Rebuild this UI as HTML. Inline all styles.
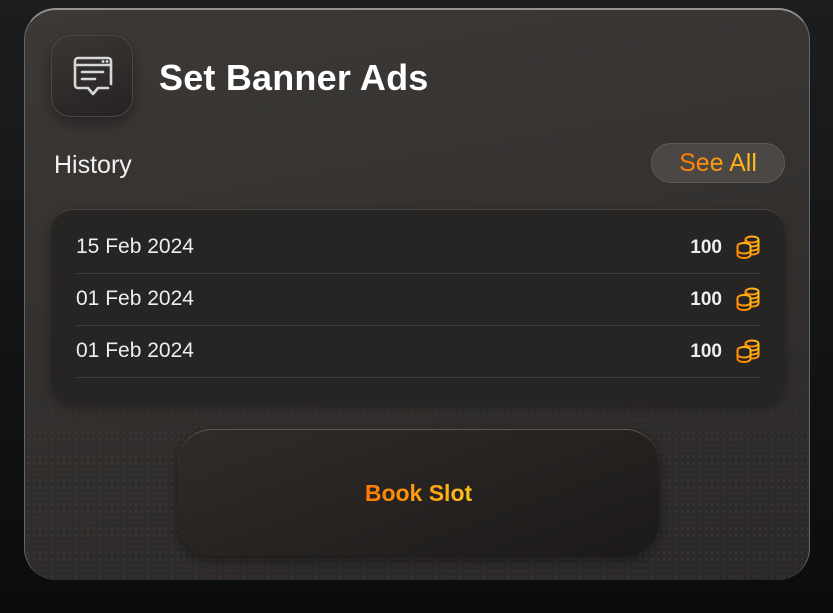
<!DOCTYPE html>
<html><head><meta charset="utf-8"><style>
*{margin:0;padding:0;box-sizing:border-box}
body{width:833px;height:613px;overflow:hidden;background:linear-gradient(#1c1d1f,#0b0c0d);font-family:"Liberation Sans",sans-serif;position:relative}
.card{position:absolute;left:24px;top:8px;width:786px;height:572px;border-radius:32px;background:linear-gradient(170deg,#3c3937 0%,#353230 40%,#2b2928 100%);border-top:2px solid #97928e;border-left:1.5px solid #6a6663;border-right:1.5px solid #6a6663;overflow:hidden}
.dots{position:absolute;left:0;right:0;top:360px;bottom:0;background-image:radial-gradient(circle,rgba(140,135,130,.3) 0.8px,transparent 1.2px);background-size:6px 6px;opacity:.45;-webkit-mask-image:linear-gradient(transparent,#000 40%);mask-image:linear-gradient(transparent,#000 40%)}
.ib{position:absolute;left:26px;top:25px;width:82px;height:82px;border-radius:20px;background:linear-gradient(160deg,#3a3634,#252322);border:1px solid #4a4644;box-shadow:0 6px 14px rgba(0,0,0,.35)}
.title{position:absolute;left:134px;top:47px;color:#fff;font-size:36px;font-weight:bold;letter-spacing:.2px}
.hist{position:absolute;left:29px;top:141px;color:#f2f2f2;font-size:25px}
.see{position:absolute;left:626px;top:133px;width:134px;height:40px;border-radius:20px;background:#4a4745;border:1px solid #5e5a57;font-size:25px;text-align:center;line-height:38px}
.grad{background:linear-gradient(90deg,#ff7a00,#ffc21a);-webkit-background-clip:text;background-clip:text;color:transparent}
.box{position:absolute;left:26px;top:199px;width:734px;height:194px;border-radius:22px;background:#272523;border-top:1px solid #4a4643;box-shadow:0 4px 10px rgba(0,0,0,.3)}
.row{position:absolute;left:25px;width:684px;height:52px;border-bottom:1.5px solid #3d3a38;color:#eee;font-size:21px}
.row .d{position:absolute;left:0;top:13px}
.row .n{position:absolute;right:38px;top:15px;font-weight:bold;font-size:19px}
.row svg{position:absolute;right:0;top:13px}
.btn{position:absolute;left:153px;top:419px;width:481px;height:127px;border-radius:34px;background:linear-gradient(160deg,#302c29,#1c1a19);border-top:1.5px solid #5e5954;box-shadow:0 4px 12px rgba(0,0,0,.4);text-align:center;line-height:127px;font-size:23px;font-weight:bold}
</style></head><body>
<div class="card">
<div class="dots"></div>
<div class="ib"><svg width="82" height="82" viewBox="0 0 82 82"><g fill="none" stroke="#d8d8d8" stroke-width="2.6" stroke-linecap="round" stroke-linejoin="round"><path d="M59 48V25a3 3 0 0 0-3-3H26a3 3 0 0 0-3 3v24a3 3 0 0 0 3 3h10l5 6 5-6h10"/><path d="M23 29h36"/><path d="M30 36h21M30 43h13"/></g><circle cx="51" cy="25.5" r="1.4" fill="#ddd"/><circle cx="55" cy="25.5" r="1.4" fill="#ddd"/></svg></div>
<div class="title">Set Banner Ads</div>
<div class="hist">History</div>
<div class="see"><span class="grad">See All</span></div>
<div class="box">
<svg width="0" height="0" style="position:absolute"><defs><linearGradient id="g" x1="0" y1="1" x2="1" y2="0"><stop offset="0" stop-color="#ff7a00"/><stop offset="1" stop-color="#ffc21a"/></linearGradient><g id="c" fill="none" stroke="url(#g)" stroke-width="2"><ellipse cx="16" cy="4.5" rx="6.5" ry="3"/><path d="M9.5 4.5v12c0 1.6 2.9 3 6.5 3s6.5-1.4 6.5-3v-12M9.5 8.5c0 1.6 2.9 3 6.5 3s6.5-1.4 6.5-3M9.5 12.5c0 1.6 2.9 3 6.5 3s6.5-1.4 6.5-3"/><ellipse cx="8" cy="11" rx="6.5" ry="3" fill="#272523"/><path d="M1.5 11v9c0 1.6 2.9 3 6.5 3s6.5-1.4 6.5-3v-9M1.5 15.5c0 1.6 2.9 3 6.5 3s6.5-1.4 6.5-3" fill="#272523"/></g></defs></svg>
<div class="row" style="top:12px"><span class="d">15 Feb 2024</span><span class="n">100</span><svg width="24" height="24" viewBox="0 0 24 24"><use href="#c"/></svg></div>
<div class="row" style="top:64px"><span class="d">01 Feb 2024</span><span class="n">100</span><svg width="24" height="24" viewBox="0 0 24 24"><use href="#c"/></svg></div>
<div class="row" style="top:116px"><span class="d">01 Feb 2024</span><span class="n">100</span><svg width="24" height="24" viewBox="0 0 24 24"><use href="#c"/></svg></div>
</div>
<div class="btn"><span class="grad">Book Slot</span></div>
</div>
</body></html>
